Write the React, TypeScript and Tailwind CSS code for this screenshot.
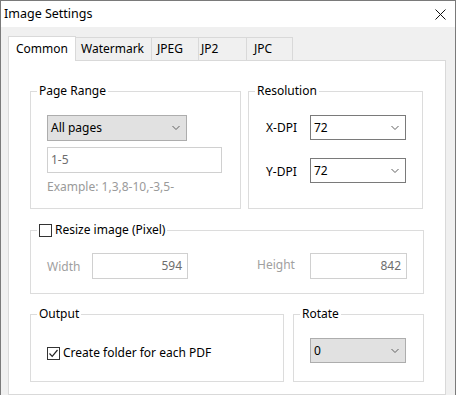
import React from "react";

function Chevron() {
  return (
    <svg width="8" height="5" viewBox="0 0 8 5" className="absolute right-[6px] top-1/2 -translate-y-1/2">
      <polyline points="0.5,0.5 4,4 7.5,0.5" fill="none" stroke="#606060" strokeWidth="1" />
    </svg>
  );
}

function Combo({ value, gray, w, h }: { value: string; gray?: boolean; w: string; h: string }) {
  return (
    <div
      className={
        "relative flex items-center pl-[3px] border " +
        (gray ? "bg-[#e1e1e1] border-[#adadad] " : "bg-white border-[#7a7a7a] ") +
        w +
        " " +
        h
      }
    >
      <span className="text-black">{value}</span>
      <Chevron />
    </div>
  );
}

function Group({ label, className, children }: { label: React.ReactNode; className: string; children?: React.ReactNode }) {
  return (
    <div className={"relative border border-[#dcdcdc] " + className}>
      <div className="absolute left-[6px] top-[-9px] bg-white px-[2px] leading-[16px] flex items-center">{label}</div>
      {children}
    </div>
  );
}

function CheckBox({ checked }: { checked?: boolean }) {
  return (
    <span className="w-[13px] h-[13px] border border-[#333333] bg-white flex items-center justify-center shrink-0">
      {checked && (
        <svg width="11" height="11" viewBox="0 0 11 11">
          <polyline points="1.5,5.5 4.2,8.3 9.5,2" fill="none" stroke="#222222" strokeWidth="1.2" />
        </svg>
      )}
    </span>
  );
}

export default function App() {
  return (
    <div className="w-[456px] h-[395px] overflow-hidden bg-[#f0f0f0] border-l border-r border-t border-[#7a7a7a] flex flex-col text-[12px] text-black font-['Noto_Sans',sans-serif] leading-[16px]">
      {/* title bar */}
      <div className="h-[26px] bg-white flex items-center justify-between pl-[3px] pr-[9px] shrink-0">
        <span className="text-[12.5px]">Image Settings</span>
        <svg width="11" height="11" viewBox="0 0 11 11">
          <line x1="0.5" y1="0.5" x2="10.5" y2="10.5" stroke="#111" strokeWidth="1" />
          <line x1="10.5" y1="0.5" x2="0.5" y2="10.5" stroke="#111" strokeWidth="1" />
        </svg>
      </div>
      {/* tabs */}
      <div className="pt-[9px] pl-[7px] pr-[9px] flex flex-col flex-1">
        <div className="flex items-end h-[24px]">
          <div className="relative z-10 w-[68px] h-[25px] -mb-px bg-white border border-b-0 border-[#d9d9d9] pl-[7px] flex items-center">
            Common
          </div>
          <div className="w-[77px] h-[23px] -ml-px bg-[#f0f0f0] border border-b-0 border-[#d9d9d9] pl-[5px] flex items-center">
            Watermark
          </div>
          <div className="w-[48px] h-[23px] -ml-px bg-[#f0f0f0] border border-b-0 border-[#d9d9d9] pl-[5px] flex items-center">
            JPEG
          </div>
          <div className="w-[49px] h-[23px] -ml-px bg-[#f0f0f0] border border-b-0 border-[#d9d9d9] pl-[2px] flex items-center">
            JP2
          </div>
          <div className="w-[47px] h-[23px] -ml-px bg-[#f0f0f0] border border-b-0 border-[#d9d9d9] pl-[7px] flex items-center">
            JPC
          </div>
        </div>
        <div className="flex-1 bg-white border border-[#d9d9d9] pl-[21px] pt-[30px] flex flex-col">
          {/* row 1 */}
          <div className="flex gap-[7px]">
            <Group label="Page Range" className="w-[211px] h-[118px] pl-[16px] pt-[23px] flex flex-col">
              <Combo value="All pages" gray w="w-[140px]" h="h-[26px]" />
              <div className="mt-[6px] w-[175px] h-[26px] border border-[#d0d0d0] flex items-center pl-[3px] text-[#6d6d6d]">
                1-5
              </div>
              <div className="mt-[6px] text-[#9a9a9a]">Example: 1,3,8-10,-3,5-</div>
            </Group>
            <Group label="Resolution" className="w-[175px] h-[118px] pl-[17px] pt-[23px] flex flex-col gap-[18px]">
              <div className="flex items-center">
                <span className="w-[44px]">X-DPI</span>
                <Combo value="72" w="w-[96px]" h="h-[25px]" />
              </div>
              <div className="flex items-center">
                <span className="w-[44px] mt-[3px]">Y-DPI</span>
                <Combo value="72" w="w-[96px]" h="h-[25px]" />
              </div>
            </Group>
          </div>
          {/* row 2 */}
          <Group
            label={
              <>
                <CheckBox />
                <span className="ml-[3px]">Resize image (Pixel)</span>
              </>
            }
            className="mt-[21px] w-[394px] h-[64px] pl-[16px] pt-[22px] flex items-start"
          >
            <div className="flex items-center">
              <span className="w-[45px] text-[#a0a0a0] mt-[1px]">Width</span>
              <div className="w-[96px] h-[26px] border border-[#d0d0d0] flex items-center justify-end pr-[5px] text-[#6d6d6d]">
                594
              </div>
              <span className="ml-[69px] w-[53px] text-[#a0a0a0] -mt-[3px]">Height</span>
              <div className="w-[97px] h-[26px] border border-[#d0d0d0] flex items-center justify-end pr-[5px] text-[#6d6d6d]">
                842
              </div>
            </div>
          </Group>
          {/* row 3 */}
          <div className="mt-[20px] flex gap-[9px]">
            <Group label="Output" className="w-[254px] h-[68px] pl-[16px] pt-[30px]">
              <div className="flex items-center">
                <CheckBox checked />
                <span className="ml-[3px]">Create folder for each PDF</span>
              </div>
            </Group>
            <Group label="Rotate" className="w-[131px] h-[68px] pl-[16px] pt-[23px]">
              <Combo value="0" gray w="w-[96px]" h="h-[25px]" />
            </Group>
          </div>
        </div>
      </div>
    </div>
  );
}
